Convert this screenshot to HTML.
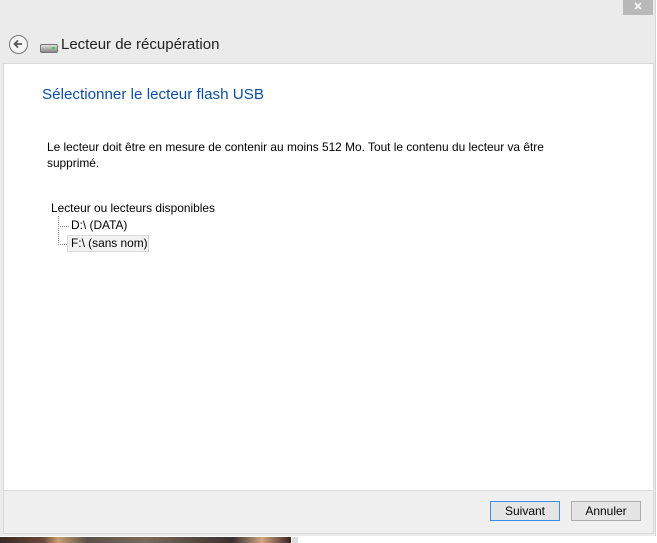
<!DOCTYPE html>
<html><head><meta charset="utf-8"><style>
body{margin:0;width:657px;height:543px;overflow:hidden;background:#fff;font-family:"Liberation Sans",sans-serif;position:relative}
.win{position:absolute;left:0;top:0;width:655px;height:536px;background:#ebebeb;border-right:1px solid #d4d4d4}
.close{position:absolute;left:623px;top:0;width:30px;height:15px;background:#b9b9b9;color:#fff;font-size:11px;font-weight:bold;text-align:center;line-height:15px}
.back{position:absolute;left:9px;top:35px;width:19px;height:19px;border:1.5px solid #777;border-radius:50%;box-sizing:border-box;background:#f4f4f4}
.title{position:absolute;left:61px;top:36px;font-size:15px;color:#222}
.panel{position:absolute;left:3px;top:63px;width:649px;height:427px;background:#fff;border:1px solid #d9d9d9;border-bottom:none}
.foot{position:absolute;left:3px;top:490px;width:649px;height:42px;background:#f0f0f0;border:1px solid #d9d9d9;border-top:1px solid #dcdcdc}
.h{position:absolute;left:42px;top:86px;font-size:15.2px;color:#0d4fa8}
.t{position:absolute;font-size:11.9px;color:#000;line-height:16px}
.btn{position:absolute;top:501px;width:70px;height:20px;box-sizing:border-box;border:1px solid #adadad;background:#e5e5e5;font-size:12px;text-align:center;line-height:18px}
.dot{position:absolute;border-left:1px dotted #888;border-bottom:1px dotted #888}
</style></head><body>
<div class="win">
<div class="close">✕</div>
<div class="back"><svg width="16" height="16" viewBox="0 0 16 16" style="position:absolute;left:0;top:0"><path d="M12 8H4.5M8 4.5L4.5 8L8 11.5" stroke="#555" stroke-width="1.7" fill="none"/></svg></div>
<div style="position:absolute;left:40px;top:44px;width:16px;height:7px;background:linear-gradient(#ddd,#888);border:1px solid #777;border-radius:2px"><div style="position:absolute;right:2px;top:2px;width:3px;height:2px;background:#4c4"></div></div>
<div class="title">Lecteur de récupération</div>
<div class="panel"></div>
<div class="h">Sélectionner le lecteur flash USB</div>
<div class="t" style="left:47px;top:139px">Le lecteur doit être en mesure de contenir au moins 512 Mo. Tout le contenu du lecteur va être<br>supprimé.</div>
<div class="t" style="left:51px;top:200px">Lecteur ou lecteurs disponibles</div>
<div class="dot" style="left:58px;top:216px;width:10px;height:10px"></div>
<div class="dot" style="left:58px;top:226px;width:10px;height:18px"></div>
<div class="t" style="left:71px;top:217px">D:\ (DATA)</div>
<div style="position:absolute;left:67px;top:235px;width:82px;height:17px;background:#f2f2f2;border:1px solid #dadada;box-sizing:border-box"></div>
<div class="t" style="left:71px;top:235px">F:\ (sans nom)</div>
<div class="foot"></div>
<div class="btn" style="left:490px;border-color:#3c8fe0">Suivant</div>
<div class="btn" style="left:571px">Annuler</div>
</div>
<div style="position:absolute;left:0;top:537px;width:291px;height:6px;background:linear-gradient(90deg,#3a2a22,#6a4a3a 15%,#c8a070 20%,#5a5048 30%,#7a6a5a 50%,#3a3030 80%,#d0a880 90%,#3a2020)"></div>
<div style="position:absolute;left:292px;top:537px;width:6px;height:6px;background:#ddd"></div>
</body></html>
